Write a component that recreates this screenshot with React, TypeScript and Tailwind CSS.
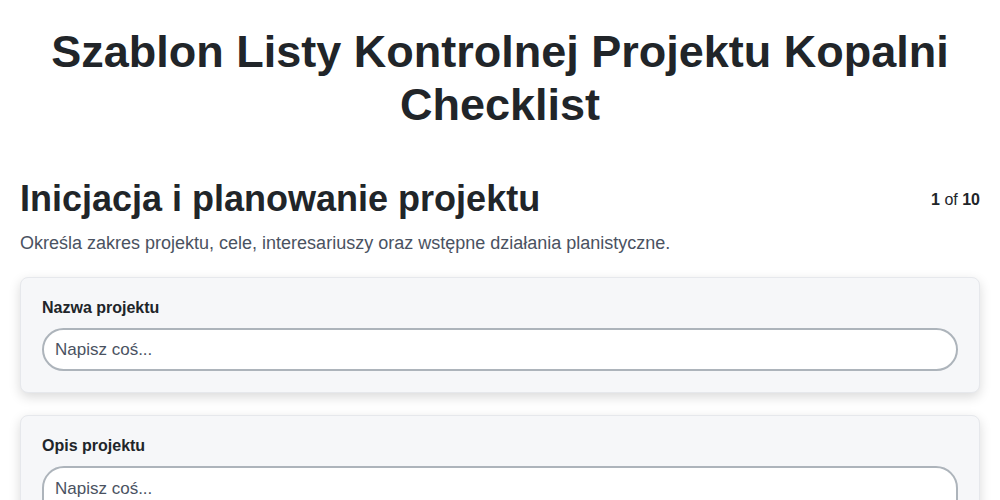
export default function App() {
  return (
    <div className="min-h-screen bg-white font-['Liberation_Sans',Arial,sans-serif] text-[#212529]">
      <div className="px-5 pt-[25px]">
        <h1 className="text-center text-[45px] font-bold leading-[53px]">
          Szablon Listy Kontrolnej Projektu Kopalni Checklist
        </h1>

        <div className="mt-[46px] flex items-center justify-between">
          <h2 className="text-[36px] font-bold leading-[44px]">Inicjacja i planowanie projektu</h2>
          <div className="pt-[1px] text-base">
            <span className="font-bold">1</span> of <span className="font-bold">10</span>
          </div>
        </div>
        <p className="mt-[9px] text-[18px] leading-[27px] text-[#4a5261]">
          Określa zakres projektu, cele, interesariuszy oraz wstępne działania planistyczne.
        </p>

        <div className="mt-[20px] flex flex-col gap-[22px]">
          <div className="rounded-lg border border-[#e6e8ec] bg-[#f6f7f9] px-[21px] pb-[21px] pt-[21px] shadow-[0_4px_12px_rgba(0,0,0,0.15)]">
            <label className="block text-[16px] font-bold leading-[18px]">Nazwa projektu</label>
            <input
              type="text"
              placeholder="Napisz coś..."
              className="mt-[11px] h-[43px] w-full rounded-full border-2 border-[#adb4bb] bg-white px-[11px] text-[17px] text-[#212529] outline-none placeholder:text-[#4a5261]"
            />
          </div>

          <div className="rounded-lg border border-[#e6e8ec] bg-[#f6f7f9] px-[21px] pb-[21px] pt-[21px] shadow-[0_4px_12px_rgba(0,0,0,0.15)]">
            <label className="block text-[16px] font-bold leading-[18px]">Opis projektu</label>
            <textarea
              placeholder="Napisz coś..."
              rows={4}
              className="mt-[11px] block w-full resize-none rounded-[22px] border-2 border-[#adb4bb] bg-white px-[11px] py-[10px] text-[17px] leading-[22px] text-[#212529] outline-none placeholder:text-[#4a5261]"
            />
          </div>
        </div>
      </div>
    </div>
  );
}
